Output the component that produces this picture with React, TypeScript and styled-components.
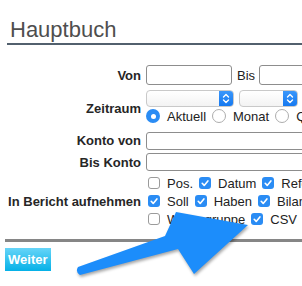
import React from "react";
import styled, { createGlobalStyle } from "styled-components";

const GlobalStyle = createGlobalStyle`
  html, body {
    margin: 0;
    padding: 0;
    background: #fff;
    overflow: hidden;
  }
  body {
    font-family: "Liberation Sans", Arial, Helvetica, sans-serif;
    font-size: 13px;
    color: #222;
  }
`;

const Page = styled.div`
  position: relative;
  width: 302px;
  height: 286px;
  overflow: hidden;
  padding-left: 5px;
  box-sizing: border-box;
`;

const Header = styled.div`
  margin-left: 2px;
  padding: 17px 0 0 3px;
  border-bottom: 2px solid #52606d;
`;

const Title = styled.h1`
  margin: 0;
  font-size: 22px;
  line-height: 26px;
  font-weight: normal;
  color: #4e4e4e;
`;

const Form = styled.div`
  display: grid;
  grid-template-columns: 136px auto;
  column-gap: 5px;
  margin-top: 18px;
`;

const Label = styled.div`
  text-align: right;
  font-weight: bold;
  color: #262626;
  align-self: center;
  white-space: nowrap;
`;

const Field = styled.div<{ $pt?: number; $pb?: number }>`
  display: flex;
  flex-direction: column;
  padding-top: ${(p) => p.$pt ?? 0}px;
  padding-bottom: ${(p) => p.$pb ?? 0}px;
  white-space: nowrap;
`;

const Line = styled.div<{ $h?: number; $mt?: number }>`
  display: flex;
  align-items: center;
  height: ${(p) => p.$h ?? 18}px;
  margin-top: ${(p) => p.$mt ?? 0}px;
`;

const TextInput = styled.div<{ $w: number; $h?: number }>`
  flex: none;
  width: ${(p) => p.$w}px;
  height: ${(p) => p.$h ?? 20}px;
  box-sizing: border-box;
  border: 1px solid #8d8d8d;
  border-radius: 3px;
  background: #fff;
`;

const InlineText = styled.span`
  margin: 0 4px 0 5px;
`;

const SelectBox = styled.div<{ $w: number }>`
  flex: none;
  position: relative;
  width: ${(p) => p.$w}px;
  height: 17px;
  box-sizing: border-box;
  border: 1px solid #c9c9c9;
  border-radius: 4px;
  background: linear-gradient(#ffffff, #f3f3f3);
  margin-right: 5px;
  display: flex;
  justify-content: flex-end;
  overflow: hidden;
`;

const SelectArrow = styled.div`
  width: 14px;
  height: 100%;
  background: linear-gradient(#3a97fb, #1679f0);
  display: flex;
  align-items: center;
  justify-content: center;
`;

const Radio = styled.span<{ $on?: boolean }>`
  flex: none;
  width: 14px;
  height: 14px;
  box-sizing: border-box;
  border-radius: 50%;
  border: ${(p) => (p.$on ? "none" : "1px solid #adadad")};
  background: ${(p) => (p.$on ? "#2a8cf4" : "#fff")};
  display: flex;
  align-items: center;
  justify-content: center;
  &::after {
    content: "";
    display: ${(p) => (p.$on ? "block" : "none")};
    width: 5px;
    height: 5px;
    border-radius: 50%;
    background: #fff;
  }
`;

const OptionText = styled.span`
  margin: 0 6px 0 7px;
  color: #222;
`;

const Box = styled.span<{ $on?: boolean }>`
  flex: none;
  width: 12px;
  height: 12px;
  margin-left: 2px;
  box-sizing: border-box;
  border-radius: 3px;
  border: ${(p) => (p.$on ? "none" : "1px solid #9b9b9b")};
  background: ${(p) => (p.$on ? "#2a8cf4" : "#fff")};
  display: flex;
  align-items: center;
  justify-content: center;
`;

const CheckText = styled.span`
  margin: 0 4px 0 7px;
  color: #222;
`;

const Rule = styled.div`
  margin-top: 9px;
  height: 3px;
  background: #868686;
`;

const Button = styled.button`
  margin-top: 6px;
  height: 23px;
  padding: 0 3px;
  border: none;
  border-radius: 0;
  background: linear-gradient(#66d4f8, #05b1e7);
  color: #fff;
  font-family: "Liberation Sans", Arial, sans-serif;
  font-size: 13px;
  font-weight: bold;
  display: block;
`;

const Overlay = styled.svg`
  position: absolute;
  left: 0;
  top: 0;
  pointer-events: none;
  filter: drop-shadow(1px 2px 1.5px rgba(0, 0, 0, 0.35));
`;

function Chevrons() {
  return (
    <svg width="10" height="15" viewBox="0 0 10 15">
      <path
        d="M2.5 6 L5 3.5 L7.5 6 M2.5 9 L5 11.5 L7.5 9"
        fill="none"
        stroke="#fff"
        strokeWidth="1.4"
        strokeLinecap="round"
        strokeLinejoin="round"
      />
    </svg>
  );
}

function Check({ on, label }: { on?: boolean; label: string }) {
  return (
    <>
      <Box $on={on}>
        {on && (
          <svg width="12" height="12" viewBox="0 0 12 12">
            <path
              d="M3.2 6.3 L5.2 8.4 L8.9 3.9"
              fill="none"
              stroke="#fff"
              strokeWidth="1.6"
              strokeLinecap="round"
              strokeLinejoin="round"
            />
          </svg>
        )}
      </Box>
      <CheckText>{label}</CheckText>
    </>
  );
}

export default function App() {
  return (
    <>
      <GlobalStyle />
      <Page>
        <Header>
          <Title>Hauptbuch</Title>
        </Header>

        <Form>
          <Label>Von</Label>
          <Field $pt={2} $pb={3}>
            <Line $h={20}>
              <TextInput $w={86} />
              <InlineText>Bis</InlineText>
              <TextInput $w={120} />
            </Line>
          </Field>

          <Label>Zeitraum</Label>
          <Field $pt={2} $pb={5}>
            <Line $h={17}>
              <SelectBox $w={88}>
                <SelectArrow>
                  <Chevrons />
                </SelectArrow>
              </SelectBox>
              <SelectBox $w={59}>
                <SelectArrow>
                  <Chevrons />
                </SelectArrow>
              </SelectBox>
            </Line>
            <Line $h={14} $mt={2}>
              <Radio $on />
              <OptionText>Aktuell</OptionText>
              <Radio />
              <OptionText>Monat</OptionText>
              <Radio />
              <OptionText>Quartal</OptionText>
            </Line>
          </Field>

          <Label>Konto von</Label>
          <Field $pt={4} $pb={2}>
            <Line $h={18}>
              <TextInput $w={300} $h={18} />
            </Line>
          </Field>

          <Label>Bis Konto</Label>
          <Field $pt={1} $pb={1}>
            <Line $h={18}>
              <TextInput $w={300} $h={18} />
            </Line>
          </Field>

          <Label>In Bericht aufnehmen</Label>
          <Field $pt={2} $pb={2}>
            <Line>
              <Check label="Pos." />
              <Check on label="Datum" />
              <Check on label="Referenz" />
            </Line>
            <Line>
              <Check on label="Soll" />
              <Check on label="Haben" />
              <Check on label="Bilanz" />
            </Line>
            <Line>
              <Check label="Warengruppe" />
              <Check on label="CSV" />
            </Line>
          </Field>
        </Form>

        <Rule />
        <Button>Weiter</Button>

        <Overlay width="302" height="286" viewBox="0 0 302 286">
          <path
            d="M78 267 L165 236 L176 212 L248 225 L194 274 L178 249 L80 275 Q75 272 78 267 Z"
            fill="#1c8dfb"
            strokeLinejoin="round"
          />
        </Overlay>
      </Page>
    </>
  );
}
